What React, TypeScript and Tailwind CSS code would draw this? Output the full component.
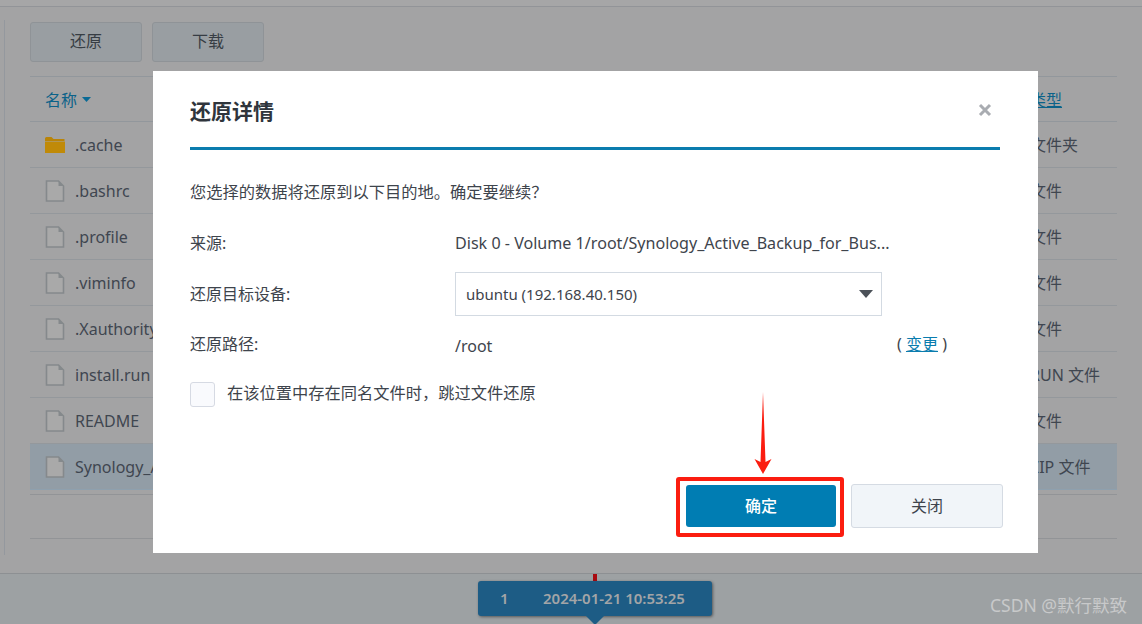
import React from "react";

const font = { fontFamily: '"Noto Sans","Noto Sans CJK SC",sans-serif' };

const rows = [
  { name: ".cache", type: "文件夹", folder: true },
  { name: ".bashrc", type: "文件" },
  { name: ".profile", type: "文件" },
  { name: ".viminfo", type: "文件" },
  { name: ".Xauthority", type: "文件" },
  { name: "install.run", type: "RUN 文件" },
  { name: "README", type: "文件" },
  { name: "Synology_Active_Backup.zip", type: "ZIP 文件", selected: true },
];

function FileIcon() {
  return (
    <svg width="20" height="22" viewBox="0 0 20 22" className="shrink-0">
      <path d="M1.5 1h12l5 5v15h-17z" fill="#a9a9a9" stroke="#85898c" strokeWidth="1.6" />
      <path d="M13.5 1v5h5z" fill="#85898c" />
    </svg>
  );
}

function FolderIcon() {
  return (
    <svg width="20" height="18" viewBox="0 0 20 18" className="shrink-0">
      <path d="M0 2.5Q0 1 1.5 1h5l2 2h11v2H0z" fill="#b98408" />
      <path d="M0 5.5h20V17H0z" fill="#c08a08" />
    </svg>
  );
}

export default function App() {
  return (
    <div style={font} className="relative flex h-[624px] w-full flex-col overflow-hidden bg-[#a3a3a4] text-[16px] text-[#3f4650]">
      <div className="h-[7px] shrink-0 border-b border-[#929498] bg-[#a6a6a7]" />
      <div className="flex h-[566px] shrink-0 pl-1 pt-[13px]">
        <div className="h-[535px] w-px shrink-0 bg-[#94989e]" />
        <div className="flex h-[519px] w-[1112px] flex-col pl-[25px] pt-[2px]">
          <div className="flex gap-[10px]">
            <button className="h-10 w-[112px] rounded-[3px] border border-[#8f9397] bg-[#999ea2] pb-[2px] text-[16px] text-[#373d44]">还原</button>
            <button className="h-10 w-[112px] rounded-[3px] border border-[#8f9397] bg-[#999ea2] pb-[2px] text-[16px] text-[#373d44]">下载</button>
          </div>
          <div className="mt-[14px] flex h-[46px] w-full items-center justify-between border-y border-[#92979c] pl-[15px] pt-[1px] text-[#0b6289]">
            <span className="flex items-center gap-[5px]">
              名称
              <svg width="9" height="5" viewBox="0 0 9 5"><path d="M0 0h9L4.5 5z" fill="#0a6a95" /></svg>
            </span>
            <span className="w-[87px] underline">类型</span>
          </div>
          {rows.map((r) => (
            <div
              key={r.name}
              className={`flex h-[46px] shrink-0 items-center justify-between border-b pl-[15px] ${
                r.selected ? "border-[#8ea0ae] bg-[#929da6]" : "border-[#94989c]"
              }`}
            >
              <span className="flex items-center gap-[10px]">
                {r.folder ? <FolderIcon /> : <FileIcon />}
                <span>{r.name}</span>
              </span>
              <span className="w-[87px] whitespace-nowrap pt-[1px]">{r.type}</span>
            </div>
          ))}
          <div className="mt-1 h-[45px] shrink-0 border-y border-[#929497]" />
        </div>
      </div>
      <div className="relative flex-1 border-t border-[#8d9093] bg-[#9da1a3]">
        <div className="mx-auto flex w-[234px] translate-x-[24px] flex-col items-center">
          <div className="h-[7px] w-1 bg-[#a90a10]" />
          <div className="flex h-[35px] w-[234px] items-center rounded-[3px] bg-[#1d5c85] pl-[22px] text-[15px] font-semibold text-[#a3a5a7] shadow-[1px_1px_3px_rgba(0,0,0,0.45)]">
            <span className="w-[43px]">1</span>
            <span>2024-01-21 10:53:25</span>
          </div>
          <svg width="18" height="9" viewBox="0 0 18 9" className="shrink-0"><path d="M0 0h18L9 9z" fill="#1d5c85" /></svg>
        </div>
      </div>

      <div className="absolute left-[153px] top-[71px] flex h-[482px] w-[885px] flex-col bg-white pl-[37px] pr-[35px] text-[#3e444c]">
        <div className="flex h-[79px] w-[810px] shrink-0 items-center justify-between border-b-[3px] border-[#0a7cae] pt-[5px]">
          <span className="text-[21px] font-bold text-[#2f353c]">还原详情</span>
          <svg width="14" height="14" viewBox="0 0 14 14" className="mr-[8px] mt-[-3px]">
            <path d="M2 2l10 10M12 2L2 12" stroke="#a9acb1" strokeWidth="3" />
          </svg>
        </div>
        <p className="mt-[32px] h-5 text-[16.25px] leading-5">{"您选择的数据将还原到以下目的地。确定要继续\uFF1F"}</p>
        <div className="mt-[31px] flex h-5 items-center leading-5">
          <span className="w-[265px]">来源:</span>
          <span className="text-[16.1px]">Disk 0 - Volume 1/root/Synology_Active_Backup_for_Bus...</span>
        </div>
        <div className="mt-[18px] flex items-center pt-[1px]">
          <span className="w-[265px]">还原目标设备:</span>
          <div className="flex h-[44px] w-[427px] items-center justify-between border border-[#d3dae2] pl-[10px] pr-[8px] text-[15px]">
            <span>ubuntu (192.168.40.150)</span>
            <svg width="14" height="8" viewBox="0 0 14 8"><path d="M0 0h14L7 8z" fill="#4b5158" /></svg>
          </div>
        </div>
        <div className="mt-[18px] flex h-5 items-center leading-5">
          <span className="w-[265px] shrink-0">还原路径:</span>
          <span className="w-[442px] shrink-0 pt-[3px]">/root</span>
          <span className="whitespace-nowrap">
            ( <span className="text-[#0a7cae] underline">变更</span> )
          </span>
        </div>
        <label className="mt-[28px] flex h-[25px] items-center gap-[12px]">
          <span className="h-[25px] w-[25px] rounded-[3px] border border-[#d6dae3] bg-[#f9fafd]" />
          <span className="pb-[2px] text-[16.25px]">{"在该位置中存在同名文件时\uFF0C跳过文件还原"}</span>
        </label>
        <div className="mt-[70px] flex items-center">
          <div className="ml-[486px] flex h-[60px] w-[168px] shrink-0 items-center rounded-[3px] border-4 border-[#fb1d10] pb-[2px] pl-[6px]">
            <button className="h-[42px] w-[150px] shrink-0 rounded-[3px] bg-[#007db3] text-[16px] font-medium text-white">确定</button>
          </div>
          <button className="mb-[2px] ml-[7px] h-[44px] w-[152px] shrink-0 rounded-[3px] border border-[#d5dbe3] bg-[#f1f5f9] text-[16px]">关闭</button>
        </div>
      </div>

      <svg width="18" height="82" viewBox="0 0 18 82" className="absolute left-[754px] top-[392px]">
        <path d="M9 0L11.5 70L17.5 67L9 82L0.5 67L6.5 70z" fill="#fb1d10" />
      </svg>
      <span className="absolute right-[15px] top-[592px] text-[17.5px] text-[#c8c9ca]">CSDN @默行默致</span>
    </div>
  );
}
